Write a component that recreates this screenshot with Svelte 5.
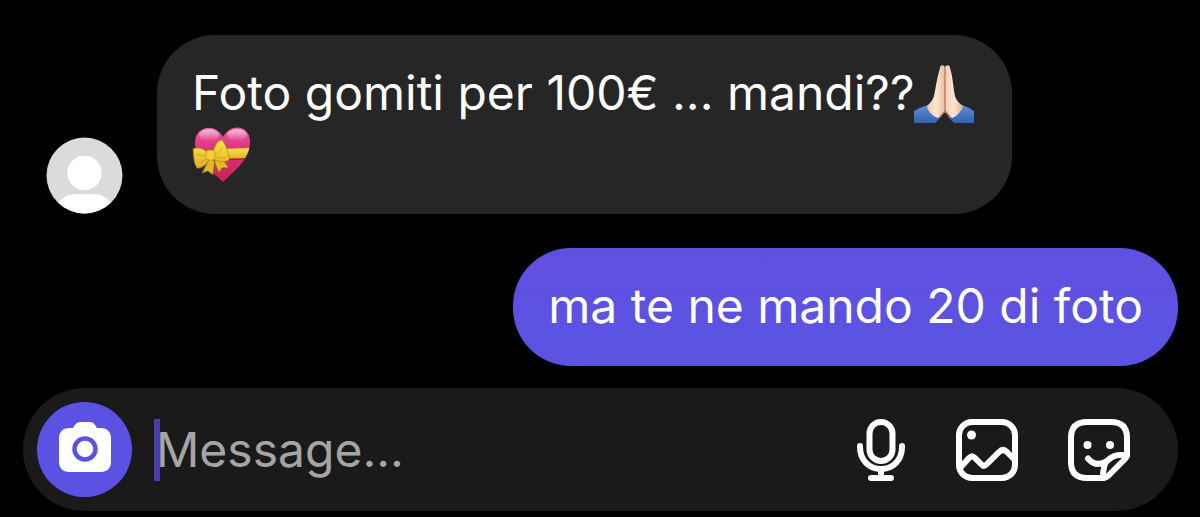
<script>
  let draft = $state('');
</script>

<main class="chat">
  <section class="thread" aria-label="Conversation">
    <div class="row received">
      <svg class="avatar" viewBox="0 0 76 76" role="img" aria-label="Profile picture">
        <defs><clipPath id="avatar-clip"><circle cx="38" cy="38" r="37.5" /></clipPath></defs>
        <g clip-path="url(#avatar-clip)">
          <rect width="76" height="76" fill="#dbdbdb" />
          <circle cx="38" cy="35.500" r="17" fill="#fff" />
          <path d="M10 68C16 59 21 56.500 28 56.500H48C55 56.500 60 59 66 68V78H10Z" fill="#fff" />
        </g>
      </svg>
      <p class="bubble incoming">Foto gomiti per 100€ ... mandi??<svg class="emoji" viewBox="0 0 60 60" role="img" aria-label="Folded hands">
          <defs>
            <linearGradient id="sleeve" x1="0" y1="0" x2="0" y2="1">
              <stop offset="0" stop-color="#5b8fdb" /><stop offset="1" stop-color="#3263ad" />
            </linearGradient>
            <linearGradient id="skin-left" x1="0" y1="0" x2="1" y2="0">
              <stop offset="0" stop-color="#f0c7ad" /><stop offset=".5" stop-color="#ffe6d0" /><stop offset="1" stop-color="#e8bda2" />
            </linearGradient>
            <linearGradient id="skin-right" x1="0" y1="0" x2="1" y2="0">
              <stop offset="0" stop-color="#f3cdb5" /><stop offset=".5" stop-color="#ffe6d0" /><stop offset="1" stop-color="#deb096" />
            </linearGradient>
          </defs>
          <path d="M0 47Q7 43 14 41L27 53L21 59H0Z" fill="url(#sleeve)" />
          <path d="M60 47Q54 43 48 41L34 53L40 59H60Z" fill="url(#sleeve)" />
          <path d="M31 3C29 0 26 1 26 4C23 13 22 23 20 32C19 36 16 39 13 42C14 48 19 52 24 54L31 48Z" fill="url(#skin-left)" />
          <path d="M31 3C33 0 36 1 36 4C39 13 39 23 41 32C42 36 45 39 49 42C47 48 43 52 38 54L31 48Z" fill="url(#skin-right)" />
          <path d="M31 3V47L26 53M31 47L36 53" fill="none" stroke="#ad765d" stroke-width="1.200" />
        </svg> <svg class="emoji" viewBox="0 0 60 60" role="img" aria-label="Heart with ribbon">
          <defs>
            <linearGradient id="heart" x1="0" y1="0" x2="0" y2="1">
              <stop offset="0" stop-color="#e85ca0" /><stop offset=".4" stop-color="#dc347f" /><stop offset="1" stop-color="#c92052" />
            </linearGradient>
            <linearGradient id="shine" x1="0" y1="0" x2="0" y2="1">
              <stop offset="0" stop-color="#fff" stop-opacity=".65" /><stop offset="1" stop-color="#fff" stop-opacity="0" />
            </linearGradient>
            <linearGradient id="ribbon" x1="0" y1="0" x2="0" y2="1">
              <stop offset="0" stop-color="#ffe94a" /><stop offset="1" stop-color="#dfae22" />
            </linearGradient>
            <clipPath id="heart-clip"><path d="M31 57C22 48 4 36 3 19C2 1 23-3 31 12C39-3 59 0 58 18C57 36 40 48 31 57Z" /></clipPath>
          </defs>
          <g clip-path="url(#heart-clip)">
            <rect width="60" height="60" fill="url(#heart)" />
            <path d="M27 25L60 24V34L27 36Z" fill="#9b1844" />
            <path d="M27 24L60 23V33L27 34Z" fill="url(#ribbon)" />
            <ellipse cx="17" cy="10" rx="10" ry="6" fill="url(#shine)" />
            <ellipse cx="45" cy="10" rx="10" ry="6" fill="url(#shine)" />
          </g>
          <path d="M17 34L10 48L16 46L21 50L23 35ZM21 34L27 48L30 43L37 43Q32 34 24 32Z" fill="#e2b82a" stroke="#806019" stroke-width=".8" />
          <path d="M16 28C11 23 6 22 1 24C2 30 1 36 5 43C10 44 15 38 18 34ZM21 27C23 20 26 15 30 15C34 20 37 28 37 35C31 38 26 36 21 34Z" fill="url(#ribbon)" stroke="#b98b1a" stroke-width=".8" />
          <path d="M5 29L16 32M25 29L31 22M8 38L15 33M24 32L34 33" fill="none" stroke="#cda522" />
          <rect x="14" y="25" width="9" height="10" rx="3" fill="#f4d234" stroke="#b98b1a" stroke-width=".7" />
        </svg></p>
    </div>
    <div class="row sent">
      <p class="bubble outgoing">ma te ne mando 20 di foto</p>
    </div>
  </section>

  <form class="composer" onsubmit={(event) => event.preventDefault()}>
    <button class="camera" type="button" aria-label="Camera">
      <svg viewBox="0 0 52 50">
        <path d="M14 6C16 2 18 0 21 0H31C34 0 36 2 38 6H42C48 6 52 10 52 16V40C52 46 48 50 42 50H10C4 50 0 46 0 40V16C0 10 4 6 10 6Z" fill="#fff" />
        <circle cx="26" cy="27" r="10.500" fill="#fff" stroke="#5b52e3" stroke-width="4.500" />
      </svg>
    </button>
    <div class="field">
      <input type="text" placeholder="Message..." aria-label="Message" bind:value={draft} />
    </div>
    <div class="actions">
      <button class="voice" type="button" aria-label="Voice message">
        <svg viewBox="0 0 64 64">
          <rect x="20.500" y="4" width="23" height="39" rx="11.500" />
          <path d="M11 28V29C11 42 20 51 32 51S53 42 53 29V28M32 51V60M22 60H42" />
        </svg>
      </button>
      <button type="button" aria-label="Photo library">
        <svg viewBox="0 0 64 64">
          <rect x="4" y="4" width="56" height="56" rx="13" />
          <circle class="dot" cx="16.500" cy="17" r="4.500" />
          <path d="M5 50L14 40Q17 37 20 40L27 47Q29 49 32 46L44 34Q48 30 52 34L59 41" />
        </svg>
      </button>
      <button type="button" aria-label="Stickers">
        <svg viewBox="0 0 64 64">
          <path d="M20 4H44Q60 4 60 20V37Q60 39 58 41L41 58Q39 60 37 60H20Q4 60 4 44V20Q4 4 20 4Z" />
          <path d="M60 37H53Q46 37 40 43Q36 47 36 60M21 40.500Q29 50 40 43" />
          <circle class="dot" cx="20.500" cy="27" r="4" />
          <circle class="dot" cx="43" cy="27" r="4" />
        </svg>
      </button>
    </div>
  </form>
</main>

<style>
  :global(body) {
    margin: 0;
    background: #000;
  }
  .chat {
    box-sizing: border-box;
    min-height: 100vh;
    padding: 35px 22px 6px 23px;
    display: flex;
    flex-direction: column;
    justify-content: space-between;
    gap: 22px;
    background: #000;
    color: #fff;
    font-family: Inter, "Liberation Sans", sans-serif;
    font-size: 48px;
    line-height: 61px;
  }
  .thread {
    display: flex;
    flex-direction: column;
    gap: 34px;
  }
  .row {
    display: flex;
    align-items: flex-end;
  }
  .received {
    gap: 34px;
    padding-left: 23px;
  }
  .sent {
    justify-content: flex-end;
  }
  .avatar {
    flex: none;
    width: 77px;
    height: 77px;
  }
  .bubble {
    box-sizing: border-box;
    margin: 0;
    padding: 27px 35px 30px;
    border-radius: 58px;
  }
  .incoming {
    max-width: 855px;
    background: #262626;
  }
  .outgoing {
    background: linear-gradient(#6050e0, #5b53e3);
  }
  .emoji {
    width: 60px;
    height: 60px;
    vertical-align: -4px;
    margin-block: -10px;
  }
  .composer {
    display: flex;
    align-items: center;
    height: 123px;
    box-sizing: border-box;
    padding: 0 47px 0 14px;
    border-radius: 62px;
    background: #1a1a1a;
  }
  button {
    display: flex;
    align-items: center;
    justify-content: center;
    padding: 0;
    border: 0;
    background: none;
    cursor: pointer;
  }
  .camera {
    flex: none;
    box-sizing: border-box;
    width: 95px;
    height: 95px;
    padding-bottom: 5px;
    border-radius: 50%;
    background: #5b52e3;
  }
  .camera svg {
    width: 52px;
    height: 50px;
  }
  .field {
    position: relative;
    flex: 1;
    min-width: 0;
    margin-left: 22px;
  }
  .field::before {
    content: "";
    position: absolute;
    inset: 0 auto 0 0;
    width: 6px;
    background: #4a3eac;
  }
  input {
    display: block;
    box-sizing: border-box;
    width: 100%;
    height: 62px;
    padding: 0 0 0 2px;
    border: 0;
    outline: 0;
    background: none;
    color: #fff;
    font: inherit;
  }
  input::placeholder {
    color: #a5a5a5;
    opacity: 1;
  }
  .actions {
    flex: none;
    display: flex;
    gap: 48px;
  }
  .actions button {
    width: 64px;
    height: 64px;
  }
  .actions .voice {
    width: 52px;
  }
  .actions svg {
    flex: none;
    width: 64px;
    height: 64px;
    fill: none;
    stroke: #fff;
    stroke-width: 6;
    stroke-linecap: round;
    stroke-linejoin: round;
  }
  .actions .dot {
    fill: #fff;
    stroke: none;
  }
</style>
